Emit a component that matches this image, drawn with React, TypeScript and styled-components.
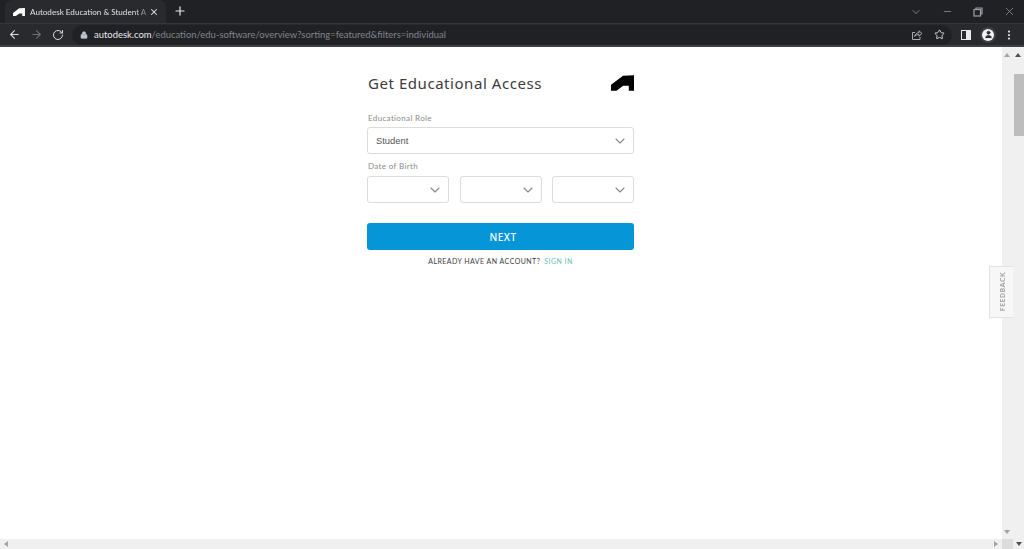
import React from 'react'
import styled, {createGlobalStyle} from 'styled-components'
import {ArrowLeft, ArrowRight, RotateCw, Lock, Star, X, Plus, ChevronDown, Minus, MoreVertical, User} from 'lucide-react'

const Global = createGlobalStyle`
  html, body { margin: 0; padding: 0; background: #fff; overflow: hidden; }
  #root { height: 549px; width: 1024px; }
  * { box-sizing: border-box; }
  svg { flex-shrink: 0; }
`

const Page = styled.div`
  display: flex;
  flex-direction: column;
  height: 549px;
  width: 1024px;
  font-family: "Noto Sans", sans-serif;
  position: relative;
`

const TabStrip = styled.div`
  display: flex;
  align-items: flex-end;
  height: 23px;
  background: #202124;
  padding-left: 5px;
`

const Tab = styled.div`
  display: flex;
  align-items: center;
  width: 161px;
  height: 23px;
  background: #292a2d;
  border-radius: 7px 7px 0 0;
  padding: 0 7px 0 8px;
  color: #dfe1e5;
`

const TabTitle = styled.span`
  flex: 1;
  min-width: 0;
  margin-left: 5px;
  font: 8.1px "Lato", sans-serif;
  white-space: nowrap;
  -webkit-mask-image: linear-gradient(90deg, #000 88%, rgba(0, 0, 0, 0.25));
  mask-image: linear-gradient(90deg, #000 88%, rgba(0, 0, 0, 0.25));
`

const NewTab = styled.div`
  display: flex;
  width: 14px;
  margin: 0 0 5px 7px;
  color: #e8eaed;
`

const WindowControls = styled.div`
  display: flex;
  align-items: center;
  gap: 20px;
  margin-left: auto;
  height: 23px;
  padding-right: 8px;
  color: #9aa0a6;
`

const Toolbar = styled.div`
  display: flex;
  align-items: center;
  height: 24px;
  background: #292a2d;
  border-top: 1px solid #35363a;
  border-bottom: 2px solid #3c4043;
  padding-left: 8px;
  color: #bdc1c6;
`

const NavButtons = styled.div`
  display: flex;
  align-items: center;
  gap: 9px;
`

const Omnibox = styled.div`
  display: flex;
  align-items: center;
  width: 880px;
  height: 20px;
  margin-left: 8px;
  padding: 0 7px 0 8px;
  background: #202124;
  border-radius: 10px;
`

const UrlText = styled.span`
  flex: 1;
  margin-left: 6px;
  font: 9.45px "Lato", sans-serif;
  color: #80868b;
  white-space: nowrap;
`

const UrlHost = styled.span`
  color: #e8eaed;
`

const OmniIcons = styled.div`
  display: flex;
  align-items: center;
  gap: 11px;
  color: #a8abb0;
`

const ToolIcons = styled.div`
  display: flex;
  align-items: center;
  gap: 10px;
  margin-left: 9px;
`

const PanelIcon = styled.div`
  width: 10px;
  height: 10px;
  border: 1px solid #e8eaed;
  background: linear-gradient(90deg, transparent 50%, #e8eaed 50%);
`

const Avatar = styled.div`
  display: flex;
  align-items: center;
  justify-content: center;
  width: 12px;
  height: 12px;
  margin: 0 -1px 0 1px;
  border-radius: 50%;
  background: #f1f3f4;
  box-shadow: 0 0 0 2px #3c4043;
  color: #292a2d;
`

const Body = styled.div`
  flex: 1;
  display: flex;
  min-height: 0;
`

const Content = styled.main`
  flex: 1;
  display: flex;
  justify-content: flex-start;
  padding: 25px 0 0 367px;
`

const Form = styled.form`
  width: 267px;
  display: flex;
  flex-direction: column;
`

const TitleRow = styled.div`
  display: flex;
  align-items: center;
  justify-content: space-between;
  height: 22px;
`

const Title = styled.h1`
  margin: 0 0 0 1px;
  font: 400 15px "Noto Sans", sans-serif;
  letter-spacing: 0.55px;
  color: #3c3c3c;
`

const Label = styled.label<{$top: number}>`
  display: block;
  margin: ${({$top}) => $top}px 0 0 1px;
  height: 13px;
  font: 8px/${({$top}) => ($top > 10 ? 14 : 13)}px "Lato", sans-serif;
  letter-spacing: 0.35px;
  color: #8a8a8a;
`

const Select = styled.div`
  flex: 1;
  display: flex;
  align-items: center;
  justify-content: space-between;
  height: 27px;
  margin-top: 3px;
  padding: 0 5px 0 8px;
  border: 1px solid #dcdcdc;
  border-radius: 3px;
  background: #fff;
  font: 9.4px "Liberation Sans", sans-serif;
  color: #555;
`

const FieldRow = styled.div`
  display: flex;
  gap: 10.5px;
`

const NextButton = styled.button`
  height: 27px;
  margin-top: 20px;
  padding: 0 0 0 5px;
  border: 0;
  border-radius: 3px;
  background: #0696d7;
  color: #fff;
  font: 500 10px "Noto Sans", sans-serif;
  letter-spacing: 0.5px;
`

const Signin = styled.p`
  margin: 5px 0 0;
  text-align: center;
  font: 7px/12px "Lato", sans-serif;
  letter-spacing: 0.45px;
  color: #3c3c3c;
`

const SigninLink = styled.a`
  margin-left: 4px;
  color: #66c0b8;
`

const VBar = styled.div`
  width: 22px;
  display: flex;
  background: #f0f0f0;
`

const ScrollTrack = styled.div<{$thumb?: boolean}>`
  position: relative;
  flex: 1;
  color: ${({$thumb}) => ($thumb ? '#505050' : '#a3a3a3')};
`

const Thumb = styled.div`
  position: absolute;
  top: 27px;
  left: 1px;
  width: 10px;
  height: 62px;
  background: #bdbdbd;
`

const ArrowUp = styled.div`
  position: absolute;
  top: 6px;
  left: 2px;
  width: 0;
  height: 0;
  border-left: 3.5px solid transparent;
  border-right: 3.5px solid transparent;
  border-bottom: 4px solid currentColor;
`

const ArrowDown = styled(ArrowUp)`
  top: auto;
  bottom: 5px;
  border-bottom: 0;
  border-top: 4px solid currentColor;
`

const HBar = styled.div`
  display: flex;
  align-items: center;
  justify-content: space-between;
  height: 10px;
  background: #f0f0f0;
  padding: 0 26px 0 4px;
`

const ArrowSide = styled.div<{$right?: boolean}>`
  width: 0;
  height: 0;
  border-top: 3.5px solid transparent;
  border-bottom: 3.5px solid transparent;
  ${({$right}) => ($right ? 'border-left: 4px solid #a3a3a3;' : 'border-right: 4px solid #a3a3a3;')}
`

const Corner = styled.div`
  position: absolute;
  right: 11px;
  bottom: 0;
  width: 11px;
  height: 10px;
  background: #dcdcdc;
`

const CornerArrow = styled(ArrowDown)`
  left: auto;
  right: 2px;
  bottom: 3px;
  color: #505050;
`

const Feedback = styled.div`
  position: absolute;
  top: 266px;
  left: 989px;
  width: 24px;
  height: 52px;
  display: flex;
  align-items: center;
  justify-content: center;
  background: #f7f7f7;
  border: 1px solid #e2e2e2;
  border-right: 0;
`

const FeedbackText = styled.span`
  writing-mode: vertical-rl;
  transform: rotate(180deg);
  font: 700 7.5px "Noto Sans", sans-serif;
  letter-spacing: 0.2px;
  color: #a9a9a9;
`

const Logo = ({color, width, height}: {color: string; width: number; height: number}) => (
  <svg width={width} height={height} viewBox="0 0 23 15.5">
    <path fill={color} d="M0 15.5V9.6L12 .6 23 0v15.5h-5.2v-5h-5.6l-6.7 5z" />
  </svg>
)

const ShareIcon = () => (
  <svg width="12" height="12" viewBox="0 0 12 12" fill="none" stroke="currentColor" strokeWidth="1">
    <path d="M4 3.5H1.5v7h7.5V8" />
    <path d="M3.5 7.5C4 5 6 3.8 8 3.8V1.8l3 2.7-3 2.7V5.6c-2 0-3.5.6-4.5 1.9z" />
  </svg>
)

const Chevron = () => <ChevronDown size={16} color="#8a8a8a" strokeWidth={1.7} />

export default function App() {
  return (
    <Page>
      <Global />
      <TabStrip>
        <Tab>
          <Logo color="#fff" width={12} height={8} />
          <TabTitle>Autodesk Education &amp; Student A</TabTitle>
          <X size={10} strokeWidth={2.5} color="#e8eaed" />
        </Tab>
        <NewTab><Plus size={14} strokeWidth={2} /></NewTab>
        <WindowControls>
          <ChevronDown size={12} strokeWidth={1.5} />
          <Minus size={11} strokeWidth={1.5} />
          <svg width="10" height="10" viewBox="0 0 10 10" fill="none" stroke="currentColor" strokeWidth="1.2">
            <rect x="1" y="2.5" width="6.5" height="6.5" />
            <path d="M3 2.5V1h6v6H7.5" />
          </svg>
          <X size={13} strokeWidth={1.3} />
        </WindowControls>
      </TabStrip>
      <Toolbar>
        <NavButtons>
          <ArrowLeft size={13} strokeWidth={2} color="#dadce0" />
          <ArrowRight size={13} strokeWidth={2} color="#6f7175" />
          <RotateCw size={12} strokeWidth={2} color="#dadce0" />
        </NavButtons>
        <Omnibox>
          <Lock size={8} color="#bdc1c6" fill="#bdc1c6" />
          <UrlText>
            <UrlHost>autodesk.com</UrlHost>/education/edu-software/overview?sorting=featured&amp;filters=individual
          </UrlText>
          <OmniIcons>
            <ShareIcon />
            <Star size={11} strokeWidth={2} color="#dadce0" />
          </OmniIcons>
        </Omnibox>
        <ToolIcons>
          <PanelIcon />
          <Avatar><User size={9} fill="#292a2d" /></Avatar>
          <MoreVertical size={12} strokeWidth={2.5} color="#dadce0" />
        </ToolIcons>
      </Toolbar>
      <Body>
        <Content>
          <Form>
            <TitleRow>
              <Title>Get Educational Access</Title>
              <Logo color="#000" width={23} height={16} />
            </TitleRow>
            <Label $top={17}>Educational Role</Label>
            <FieldRow><Select>Student<Chevron /></Select></FieldRow>
            <Label $top={6}>Date of Birth</Label>
            <FieldRow>
              <Select><span /><Chevron /></Select>
              <Select><span /><Chevron /></Select>
              <Select><span /><Chevron /></Select>
            </FieldRow>
            <NextButton type="button">NEXT</NextButton>
            <Signin>ALREADY HAVE AN ACCOUNT?<SigninLink>SIGN IN</SigninLink></Signin>
          </Form>
        </Content>
        <VBar>
          <ScrollTrack><ArrowUp /><ArrowDown /></ScrollTrack>
          <ScrollTrack $thumb><ArrowUp /><Thumb /></ScrollTrack>
        </VBar>
      </Body>
      <HBar>
        <ArrowSide />
        <ArrowSide $right />
      </HBar>
      <Corner />
      <CornerArrow />
      <Feedback><FeedbackText>FEEDBACK</FeedbackText></Feedback>
    </Page>
  )
}
